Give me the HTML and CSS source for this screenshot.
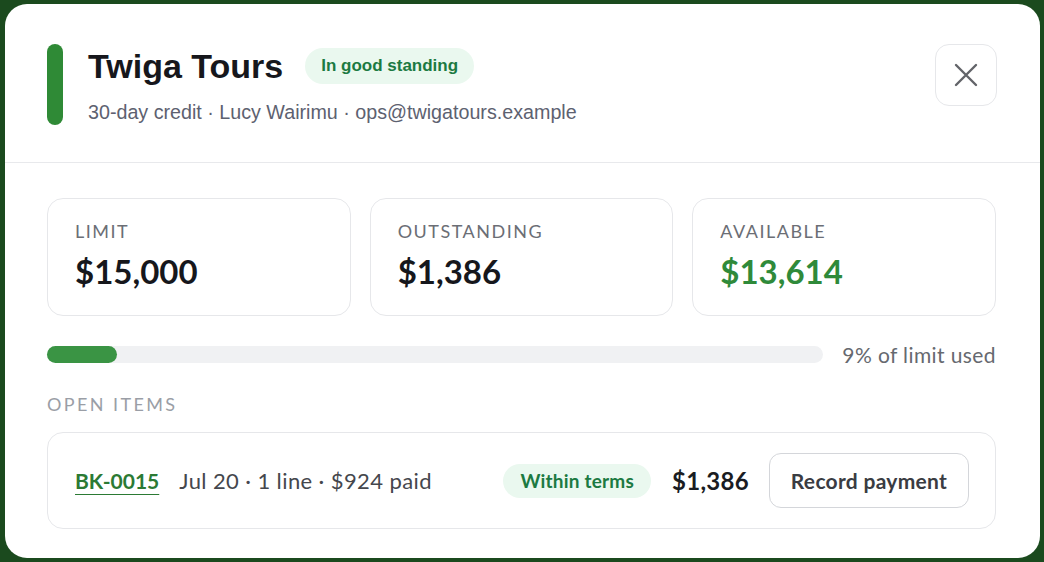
FILE: index.html
```html
<!DOCTYPE html>
<html>
<head>
	<meta http-equiv="Content-Type" content="text/html;charset=UTF-8">
	<title>Twiga Tours - credit</title>
	<link rel="stylesheet" href="styles.css">
</head>
<body>
	<div class="card">
		<!-- 头部 -->
		<div class="head">
			<div class="bar"></div>
			<div class="who">
				<div class="title-row">
					<h1 class="title">Twiga Tours</h1>
					<span class="standing">In good standing</span>
				</div>
				<p class="sub">30-day credit · Lucy Wairimu · ops@twigatours.example</p>
			</div>
			<button class="close" type="button">
				<svg width="24" height="24" viewBox="0 0 24 24"><path d="M2 2L22 22M22 2L2 22" stroke="#626469" stroke-width="2.4" stroke-linecap="round" fill="none"/></svg>
			</button>
		</div>

		<div class="body">
			<div class="stats">
				<div class="stat">
					<div class="label">Limit</div>
					<div class="value">$15,000</div>
				</div>
				<div class="stat">
					<div class="label">Outstanding</div>
					<div class="value">$1,386</div>
				</div>
				<div class="stat">
					<div class="label">Available</div>
					<div class="value green">$13,614</div>
				</div>
			</div>

			<div class="usage">
				<div class="track"><div class="fill" style="width: 9%"></div></div>
				<span class="used">9% of limit used</span>
			</div>

			<div class="section">Open items</div>

			<div class="item">
				<a class="ref" href="#">BK-0015</a>
				<span class="meta">Jul 20 · 1 line · $924 paid</span>
				<span class="terms">Within terms</span>
				<span class="amount">$1,386</span>
				<button class="record" type="button">Record payment</button>
			</div>
		</div>
	</div>
</body>
</html>
```

FILE: styles.css
```css
*{ margin: 0; padding: 0; box-sizing: border-box; }
body{ background: #1b4a1e; padding: 4px 4px 4px 5px; font-family: Lato, "Liberation Sans", sans-serif; }

.card{ width: 1035px; height: 554px; background: #fff; border-radius: 22px; overflow: hidden; }

/* 头部 */
.head{ display: flex; align-items: stretch; padding: 40px 43px 37px 42px; border-bottom: 1px solid #e8e9ec; }
.bar{ width: 16px; border-radius: 8px; background: #2f8a36; flex: none; }
.who{ flex: 1; margin-left: 25px; font-family: "Liberation Sans", Arial, sans-serif; }
.title-row{ display: flex; align-items: center; gap: 22px; height: 44px; }
.title{ font-size: 34px; font-weight: 700; color: #16171c; }
.standing{ height: 36px; line-height: 36px; padding: 0 16px; border-radius: 18px; background: #eaf8ef; color: #1c7a42; font-size: 17px; font-weight: 700; }
.sub{ margin-top: 11px; font-size: 19.7px; line-height: 26px; color: #5d6170; }
.close{ width: 62px; height: 62px; flex: none; border: 1px solid #e6e7ea; border-radius: 14px; background: #fff; display: flex; align-items: center; justify-content: center; }

.body{ padding: 35px 44px 0 42px; }

.stats{ display: grid; grid-template-columns: repeat(3, 1fr); gap: 19px; }
.stat{ height: 118px; border: 1px solid #e6e7ea; border-radius: 16px; padding: 21px 27px; }
.label{ font-size: 18px; line-height: 22px; letter-spacing: 1.5px; text-transform: uppercase; color: #6b6e75; }
.value{ margin-top: 10px; font-size: 33px; line-height: 38px; font-weight: 700; color: #16171c; }
.green{ color: #2f8a3a; }

.usage{ display: flex; align-items: center; gap: 19px; margin-top: 26px; }
.track{ flex: 1; height: 17px; border-radius: 9px; background: #f0f1f3; }
.fill{ height: 100%; border-radius: 9px; background: #3a9444; }
.used{ font-size: 21px; letter-spacing: 0.4px; color: #66696f; }

.section{ margin-top: 26px; font-size: 18px; letter-spacing: 2.4px; text-transform: uppercase; color: #9a9ea6; }

.item{ display: flex; align-items: center; height: 97px; margin-top: 17px; padding: 0 26px 0 27px; border: 1px solid #e6e7ea; border-radius: 16px; }
.ref{ font-size: 21px; font-weight: 700; color: #2b7a34; text-decoration: underline; text-underline-offset: 5px; text-decoration-thickness: 1px; }
.meta{ flex: 1; margin-left: 20px; font-size: 22px; letter-spacing: 0.4px; color: #45474d; }
.terms{ height: 34px; line-height: 34px; padding: 0 17px; border-radius: 17px; background: #eaf8ef; color: #1c7a42; font-size: 19px; letter-spacing: 0.2px; font-weight: 700; }
.amount{ margin-left: 21px; font-size: 24px; letter-spacing: 0.3px; font-weight: 700; color: #1a1c22; }
.record{ margin-left: 20px; width: 200px; height: 55px; border: 1px solid #d4d6da; border-radius: 12px; background: #fff; font-family: Lato, "Liberation Sans", sans-serif; font-size: 21px; letter-spacing: 0.3px; font-weight: 700; color: #3a3c42; }
```
